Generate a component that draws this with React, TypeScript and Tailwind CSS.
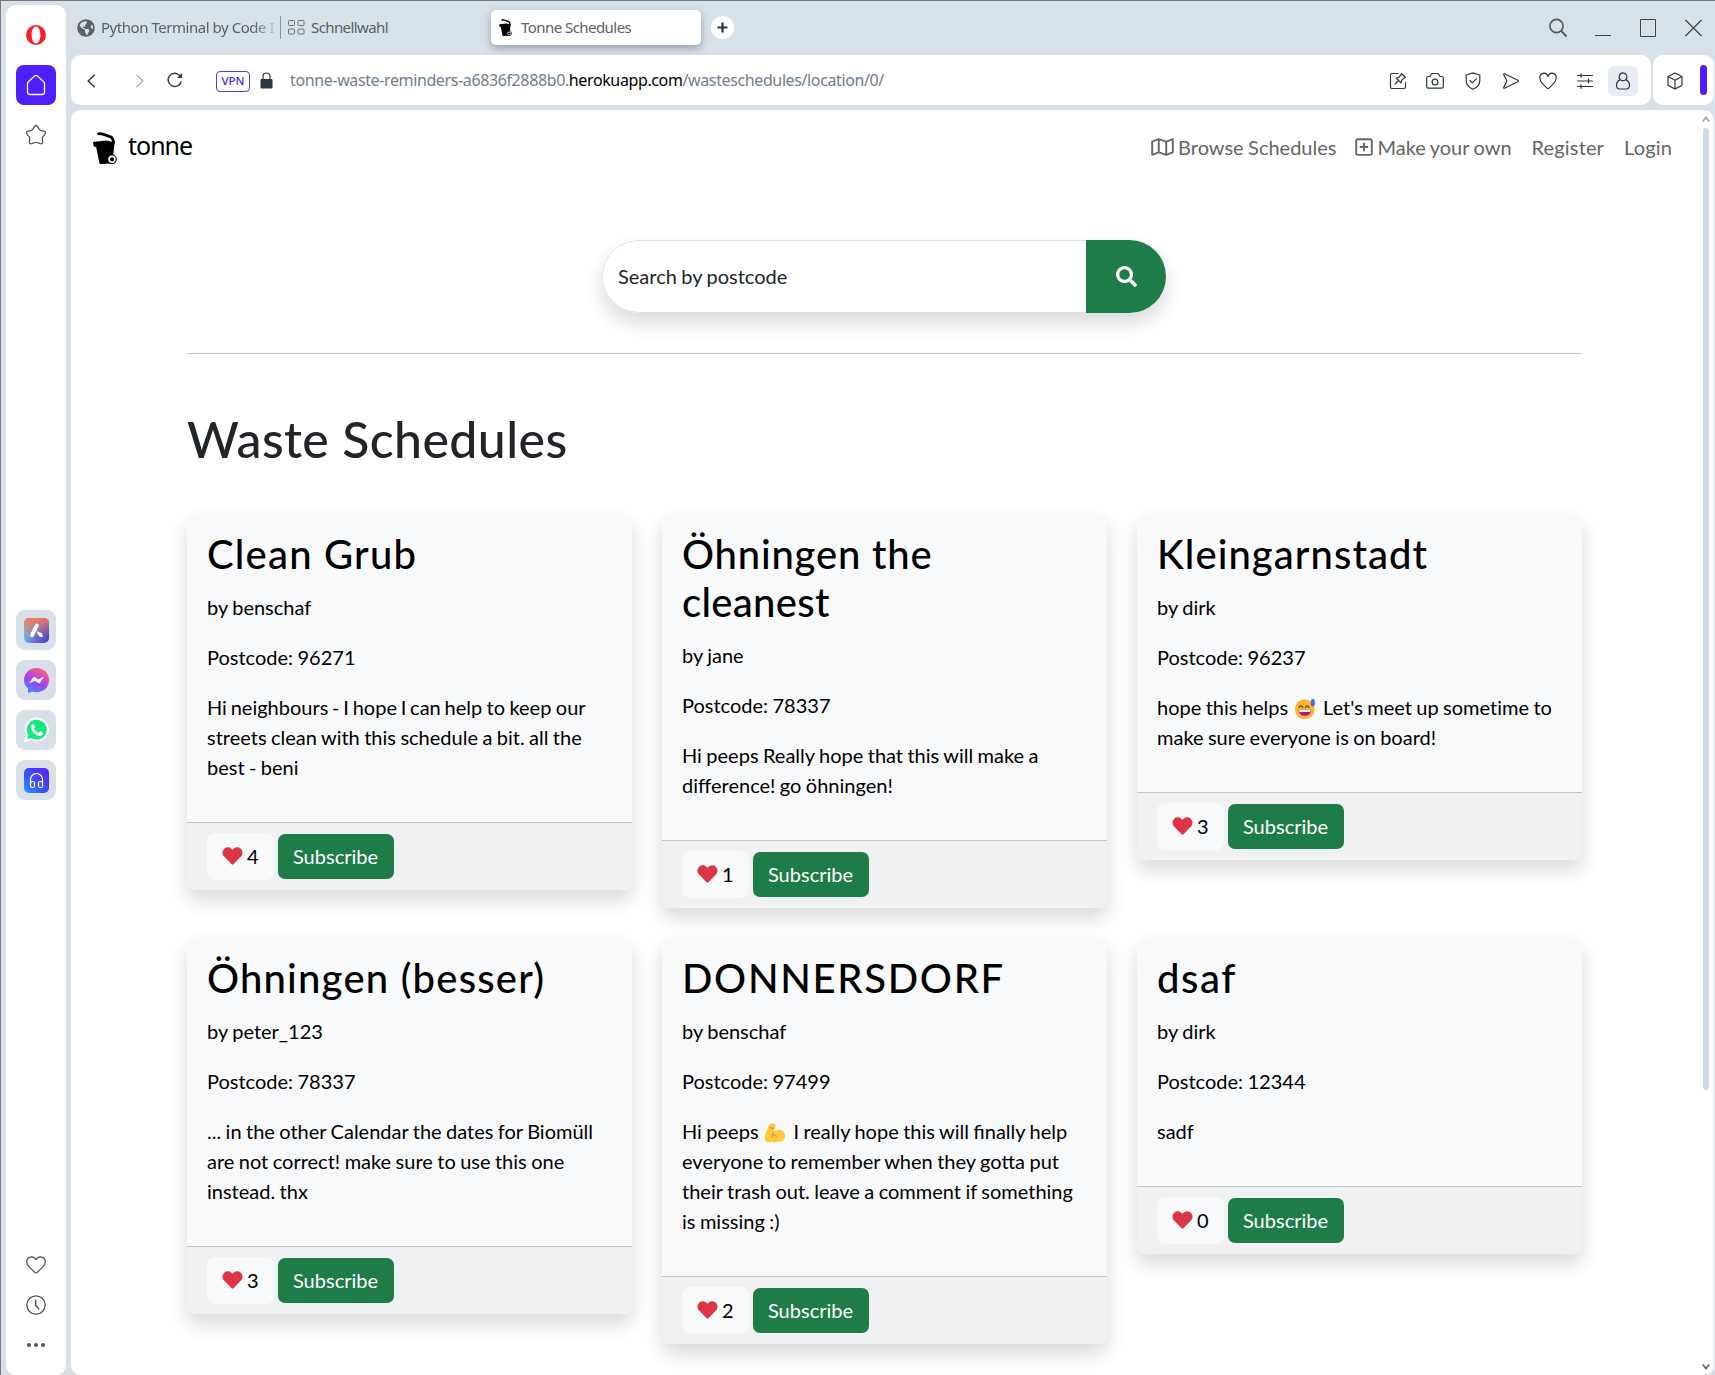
import React from "react";
import { FaHeart, FaGlobeAmericas, FaSearch } from "react-icons/fa";
import { FaRegMap, FaRegSquarePlus } from "react-icons/fa6";

const S = ({ size = 18, w = 1.2, children, className = "" }: any) => (
  <svg width={size} height={size} viewBox="0 0 18 18" fill="none" stroke="currentColor" strokeWidth={w} strokeLinecap="round" strokeLinejoin="round" className={`block shrink-0 ${className}`}>
    {children}
  </svg>
);

const Bin = ({ className = "" }: { className?: string }) => (
  <svg viewBox="0 0 24 32" className={`block shrink-0 ${className}`}>
    <path d="M5.500 1.800Q8 1.300 10 2.100L18 5Q20.300 6.500 20.500 11" fill="none" stroke="#000" strokeWidth="2.800" strokeLinecap="round" />
    <path d="M0 10.800Q0 9.800 1.200 9.700L13.500 8.600L21.500 10.500L20.200 24L19.500 31.500L8 32Q6.500 32 6.200 30.500L3.200 15.200L.8 14.500Z" fill="#000" />
    <circle cx="19" cy="27.300" r="4.800" fill="#000" />
    <circle cx="19" cy="27.300" r="2.900" fill="none" stroke="#fff" strokeWidth="1.600" />
  </svg>
);

const SweatSmile = () => (
  <svg viewBox="0 0 20 20" className="mr-[3.500px] ml-[2.500px] inline-block h-[20px] w-[20px] align-[-4px]">
    <rect x="0" y="0.500" width="19.500" height="19.500" rx="9" fill="#fdb52f" />
    <path d="M4 8.500q1.700-3.200 3.600 0M10.500 8.500q1.700-3.200 3.600 0" fill="none" stroke="#5a3a30" strokeWidth="1.200" strokeLinecap="round" />
    <path d="M3.500 10.700h12.600q-.4 6-6.300 6t-6.300-6z" fill="#b5157c" />
    <path d="M4.200 10.700h11.200v1.600q0 .8-.8.800H5q-.8 0-.8-.8z" fill="#fff" />
    <rect x="15.800" y="0" width="4" height="7.200" rx="2" fill="#4766f5" />
  </svg>
);

const Biceps = () => (
  <svg viewBox="0 0 20 20" className="mr-[3.500px] ml-[2.500px] inline-block h-[20px] w-[20px] align-[-4px]">
    <path d="M5 .8Q8-.4 10.300 1.600Q11.200 3.500 9.500 5.200L8.500 8.800Q11 6.500 14 6.800Q19.500 7.500 20 12.500Q20 17.500 16 18.600Q9 20 1.500 18.700Q-.3 18-.2 15Q.5 8 4 3.500Z" fill="#ffc83d" />
    <path d="M4 3.600L6.200 5.400L8.800 5M7.500 14L8.200 9.800M8 10.500L12 14" fill="none" stroke="#d8862c" strokeWidth="1" strokeLinecap="round" />
  </svg>
);

type Card = { title: React.ReactNode; track: string; by: string; code: string; text: React.ReactNode; likes: number };

const cards: Card[] = [
  { title: "Clean Grub", track: "tracking-[1.2px]", by: "benschaf", code: "96271", text: <><span className="[word-spacing:-1.35px]">Hi neighbours - I hope I can help</span> to keep our streets clean with this schedule a bit. all the best - beni</>, likes: 4 },
  { title: <>Öhningen the<br /><span className="tracking-[0.3px]">cleanest</span></>, track: "tracking-[0.8px]", by: "jane", code: "78337", text: "Hi peeps Really hope that this will make a difference! go öhningen!", likes: 1 },
  { title: "Kleingarnstadt", track: "tracking-[1.05px]", by: "dirk", code: "96237", text: <span className="[font-variant-ligatures:none]">hope this helps <SweatSmile /> Let's meet up sometime to make sure everyone is on board!</span>, likes: 3 },
  { title: "Öhningen (besser)", track: "tracking-[1.2px]", by: "peter_123", code: "78337", text: "... in the other Calendar the dates for Biomüll are not correct! make sure to use this one instead. thx", likes: 3 },
  { title: "DONNERSDORF", track: "tracking-[1.7px]", by: "benschaf", code: "97499", text: <>Hi peeps <Biceps /> I really hope this will finally help everyone to remember when they gotta put their trash out. leave a comment if something is missing :)</>, likes: 2 },
  { title: "dsaf", track: "tracking-[1.6px]", by: "dirk", code: "12344", text: "sadf", likes: 0 },
];

function ScheduleCard({ c }: { c: Card }) {
  return (
    <article className="rounded-[8px] bg-[#f8f9fb] text-black shadow-[0_10px_20px_rgba(0,0,0,0.15)]">
      <div className="p-5">
        <h2 className={`-mt-[4px] mb-[14px] whitespace-nowrap text-[40px] leading-[48px] font-medium [word-spacing:0] ${c.track}`}>{c.title}</h2>
        <p className="mb-5">by {c.by}</p>
        <p className="mb-5">Postcode: {c.code}</p>
        <p className="mb-5">{c.text}</p>
      </div>
      <div className="flex h-[68px] items-center gap-1 rounded-b-[8px] border-t border-[#c3c5c8] bg-[#f0f1f3] px-5">
        <button className="flex h-[47px] w-[67px] items-center rounded-[8px] bg-[#f8f9fb] pl-[15px]">
          <FaHeart className="mr-[4px] h-[20px] w-[21px] text-[#dc3545]" />
          {c.likes}
        </button>
        <button className="h-[45px] w-[116px] rounded-[7px] bg-[#1e7c48] pr-px text-white">Subscribe</button>
      </div>
    </article>
  );
}

function AppTile({ children }: any) {
  return <div className="flex h-10 w-10 items-center justify-center rounded-[9px] bg-[#d7dfe8]">{children}</div>;
}

function Sidebar() {
  return (
    <aside className="flex h-[1370px] w-[60px] shrink-0 flex-col items-center rounded-[10px] bg-white text-[#4a5560]">
      <svg viewBox="0 0 20 20" className="mt-[20px] h-[20px] w-[20px]">
        <path fillRule="evenodd" d="M10 0a10 10 0 1 0 0 20a10 10 0 1 0 0-20zM10 1.600c2.600 0 4.400 3.700 4.400 8.400s-1.800 8.400-4.400 8.400S5.600 14.700 5.600 10S7.400 1.600 10 1.600z" fill="#fa1e2d" />
      </svg>
      <div className="mt-[20px] flex h-10 w-10 items-center justify-center rounded-[8px] bg-[#4f1fff] text-white">
        <svg width="20" height="22" viewBox="0 0 20 22" fill="none" stroke="currentColor" strokeWidth="1.300" strokeLinejoin="round">
          <path d="M1.500 9.500Q1.500 8.500 2.300 7.800L8.600 1.900Q10 .8 11.400 1.900L17.700 7.800Q18.500 8.500 18.500 9.500V18Q18.500 20.500 16 20.500H4Q1.500 20.500 1.500 18Z" />
        </svg>
      </div>
      <svg width="22" height="22" viewBox="0 0 22 22" fill="none" stroke="currentColor" strokeWidth="1.300" strokeLinejoin="round" className="mt-[19px] mr-px">
        <path d="M9.700 2.200Q11 .8 12.300 2.200L14.300 5.300Q14.800 6 15.600 6.300L19.400 7.300Q21.200 8.100 20.200 9.800L17.900 12.700Q17.400 13.400 17.400 14.200L17.600 18Q17.500 20.300 15.300 19.700L12 18.500Q11 18.200 10 18.500L6.700 19.700Q4.500 20.300 4.400 18L4.600 14.200Q4.600 13.400 4.100 12.700L1.800 9.800Q.8 8.100 2.600 7.300L6.400 6.300Q7.200 6 7.700 5.300Z" />
      </svg>
      <div className="mt-[464px] flex flex-col gap-[10px]">
        <AppTile>
          <svg width="25" height="25" viewBox="0 0 25 25">
            <defs>
              <linearGradient id="aria" x1="0" y1=".6" x2="1" y2=".8"><stop offset="0" stopColor="#5ec3ee" /><stop offset=".45" stopColor="#6a72d8" /><stop offset="1" stopColor="#5340c4" /></linearGradient>
              <linearGradient id="ariaTop" x1=".4" y1="0" x2=".5" y2=".8"><stop offset="0" stopColor="#f47c55" /><stop offset="1" stopColor="#f47c55" stopOpacity="0" /></linearGradient>
            </defs>
            <rect width="25" height="25" rx="5" fill="url(#aria)" />
            <rect width="25" height="25" rx="5" fill="url(#ariaTop)" />
            <path d="M12.800 7.600L8 17.200" stroke="#fff" strokeWidth="4" strokeLinecap="round" />
            <path d="M12.500 13.200L17.600 15Q19.300 17 18.600 19Q15.500 19.500 14.600 17.500Z" fill="#fff" />
          </svg>
        </AppTile>
        <AppTile>
          <svg width="25" height="25" viewBox="0 0 25 25">
            <defs><linearGradient id="msg" x1=".2" y1="1" x2=".7" y2="0"><stop offset="0" stopColor="#3a8cff" /><stop offset=".45" stopColor="#a040f5" /><stop offset="1" stopColor="#ff6070" /></linearGradient></defs>
            <path d="M12.500 0C5.500 0 0 5 0 12Q0 17 4 20.500V24.500Q5 25.400 8 23.500Q10 24.200 12.500 24.200C19.500 24.200 25 19 25 12S19.500 0 12.500 0z" fill="url(#msg)" />
            <path d="M5 15.500L9.200 9.300Q10 8.600 11 9.200L14 11.400L20 8.500L16 14.800Q15 15.800 14 15L11 12.700Z" fill="#fff" />
          </svg>
        </AppTile>
        <AppTile>
          <svg width="26" height="26" viewBox="0 0 26 26">
            <path d="M13.500 0.500A12 12 0 0 0 3 18L1 25.500L8 23A12 12 0 1 0 13.500 .5z" fill="#fff" />
            <path d="M13.500 2.800A9.900 9.900 0 0 0 5.300 18L4.200 22.200L8.300 20.900A9.900 9.900 0 1 0 13.500 2.800z" fill="#15e87d" />
            <path d="M9.300 7.300q1-.8 1.600.4l.9 2q.3.700-.6 1.600q-.3.500 0 1q1.600 2.500 4 3.400q.6.100 1-.4q.7-1.100 1.400-.8l2.200 1q.7.500.3 1.500q-1.200 2.300-3.800 1.900q-4.800-1-7.700-5.700q-2-3.500.7-5.900z" fill="#fff" />
          </svg>
        </AppTile>
        <AppTile>
          <svg width="25" height="25" viewBox="0 0 25 25" fill="none" stroke="#fff" strokeWidth="1.200">
            <defs><linearGradient id="play" x1="0" y1="1" x2="1" y2="0"><stop offset="0" stopColor="#2b9bff" /><stop offset=".4" stopColor="#3c55fa" /><stop offset="1" stopColor="#5a1cf5" /></linearGradient></defs>
            <rect width="25" height="25" rx="5" fill="url(#play)" stroke="none" />
            <path d="M6.500 16V11.500a6 6 0 0 1 12 0V16" />
            <rect x="6.500" y="13.500" width="4" height="6" rx="1.800" />
            <rect x="14.500" y="13.500" width="4" height="6" rx="1.800" />
          </svg>
        </AppTile>
      </div>
      <svg width="20" height="18" viewBox="0 0 20 18" fill="none" stroke="currentColor" strokeWidth="1.300" strokeLinejoin="round" className="mt-[456px] mr-px">
        <path d="M10 3.800Q8.800 1 5.600 .9Q.7 1.200 .8 6.200Q1 8.600 2.800 10.600L9 16.500Q10 17.200 11 16.500L17.200 10.600Q19 8.600 19.200 6.200Q19.300 1.200 14.400 .9Q11.200 1 10 3.800Z" />
      </svg>
      <svg width="20" height="20" viewBox="0 0 20 20" fill="none" stroke="currentColor" strokeWidth="1.300" className="mt-[20.5px] mr-px">
        <circle cx="10" cy="10" r="9.200" />
        <path d="M9.700 5.300V10.500L12.800 13.800" strokeWidth="1.500" strokeLinecap="round" />
      </svg>
      <div className="mt-[28.5px] flex gap-[3px]">
        <i className="h-1 w-1 rounded-full bg-current" />
        <i className="h-1 w-1 rounded-full bg-current" />
        <i className="h-1 w-1 rounded-full bg-current" />
      </div>
    </aside>
  );
}

function TabStrip() {
  return (
    <div className="flex h-[54px] items-center pb-px text-[15px] text-[#5b6166]">
      <FaGlobeAmericas className="ml-[6px] h-[18px] w-[18px] text-[#5f6264]" />
      <div className="ml-[6px] w-[178px] overflow-hidden whitespace-nowrap [mask-image:linear-gradient(to_right,black_86%,transparent)]">
        <span className="tracking-[-0.46px]">Python Terminal by Code I</span>
      </div>
      <div className="ml-px h-[23px] w-px bg-[#8b9299]" />
      <svg width="17" height="15" viewBox="0 0 17 15" fill="none" stroke="#6e7478" className="ml-[7px]">
        <rect x=".5" y=".5" width="6" height="5" rx="1" /><rect x="10" y=".5" width="6" height="5" rx="1" />
        <rect x=".5" y="9" width="6" height="5" rx="1" /><rect x="10" y="9" width="6" height="5" rx="1" />
      </svg>
      <span className="ml-[6px] w-[180px] tracking-[-0.6px]">Schnellwahl</span>
      <div className="flex h-[35px] w-[210px] items-center rounded-[5px] bg-white shadow-[0_3px_8px_rgba(60,75,95,0.45)]">
        <Bin className="ml-[8px] h-[17px] w-[13px]" />
        <span className="ml-[9px] tracking-[-0.55px]">Tonne Schedules</span>
      </div>
      <div className="ml-[10px] flex h-[23px] w-[23px] items-center justify-center rounded-full bg-white text-[#26323c]">
        <svg width="11" height="11" viewBox="0 0 11 11" stroke="currentColor" strokeWidth="2.200"><path d="M5.500 .5V10.500M.5 5.500H10.500" /></svg>
      </div>
      <div className="mr-[12px] ml-auto flex items-center text-[#444]">
        <svg width="20" height="20" viewBox="0 0 20 20" fill="none" stroke="#55595c" strokeWidth="1.600"><circle cx="8.500" cy="8" r="6.600" /><path d="M13 12.700L18.500 18.500" strokeWidth="1.900" /></svg>
        <svg width="16" height="18" viewBox="0 0 16 18" fill="none" stroke="currentColor" className="ml-[27px]"><path d="M0 16.500H16" /></svg>
        <svg width="16" height="18" viewBox="0 0 16 18" fill="none" stroke="currentColor" className="ml-[29px]"><path d="M.5 .5H15.500V17.500H.5Z" /></svg>
        <svg width="17" height="18" viewBox="0 0 17 18" fill="none" stroke="currentColor" strokeWidth="1.200" className="ml-[29px]"><path d="M.5 1L16.500 17M16.500 1L.5 17" /></svg>
      </div>
    </div>
  );
}

function AddressBar() {
  return (
    <div className="flex h-[50px] gap-[2px] text-[#2b3742]">
      <div className="flex w-[1580px] items-center rounded-[10px] bg-white pt-[2px]">
        <S size={14} w={1.9} className="ml-[14px]"><path d="M12 1.500L4 9L12 16.500" /></S>
        <S size={14} w={1.5} className="ml-[33px] text-[#a3a9ae]"><path d="M6 1.500L14 9L6 16.500" /></S>
        <svg width="16" height="16" viewBox="0 0 16 16" fill="none" stroke="currentColor" strokeWidth="1.400" className="-mt-[2px] ml-[21px]">
          <path d="M14.200 9.500A6.600 6.600 0 1 1 12.800 3.600L14.500 5.300" /><path d="M15 1V6H10Z" fill="currentColor" stroke="none" />
        </svg>
        <span className="ml-[33px] flex h-[21px] w-[34px] items-center justify-center rounded-[4px] border border-[#5b35e8] text-[11.5px] font-medium text-[#4f1fe8]">VPN</span>
        <svg width="13" height="17" viewBox="0 0 13 17" className="-mt-px ml-[10px] text-[#2b3742]">
          <path d="M3 8V4.200Q3 1 6.500 1T10 4.200V8" fill="none" stroke="currentColor" strokeWidth="1.200" />
          <rect x=".5" y="7" width="12" height="9.500" rx="1.200" fill="currentColor" />
        </svg>
        <span className="-mt-[2px] ml-[17px] text-[16px] tracking-[-0.38px] whitespace-nowrap text-[#70808e]">
          tonne-waste-reminders-a6836f2888b0.<span className="text-black">herokuapp.com</span>/wasteschedules/location/0/
        </span>
        <div className="mr-[13px] ml-auto flex items-center">
          <S><path d="M9 1.500H3Q1.500 1.500 1.500 3V15Q1.500 16.500 3 16.500H15Q16.500 16.500 16.500 15V10.500M6 12L9 9M12.500 1.500L16.500 5.500L14.800 6.200L12.500 8.500L12 10.800L7.200 6L9.500 5.500L11.800 3.200Z" /></S>
          <S className="ml-[19px]"><path d="M.7 6Q.7 4.500 2.200 4.500H4L5.300 2.200Q5.700 1.500 6.500 1.500H11.500Q12.300 1.500 12.700 2.200L14 4.500H15.800Q17.300 4.500 17.300 6V14.500Q17.300 16.200 15.800 16.200H2.200Q.7 16.200 .7 14.500Z" /><circle cx="9" cy="10" r="2.900" /></S>
          <S className="ml-[20px]"><path d="M9 .9L15.800 3V9Q15.600 14.300 9 17.200Q2.400 14.300 2.200 9V3ZM6 8.500L8.300 10.800L12.300 6.800" /></S>
          <S className="ml-[20px]"><path d="M2.500 1.800Q1.300 1.500 1.800 2.800L4.500 8.200Q4.800 9 4.500 9.800L1.800 15.200Q1.300 16.500 2.500 16.200L15.800 9.700Q17 9 15.800 8.300Z" /></S>
          <S className="ml-[19px]"><path d="M9 4.500Q8.200 1.500 5 1.200Q.7 1.500 .8 6.300Q1 9 3.300 11.300L8 16.200Q9 17.300 10 16.200L14.700 11.300Q17 9 17.200 6.300Q17.300 1.500 13 1.200Q9.800 1.500 9 4.500Z" /></S>
          <S className="ml-[19px]"><path d="M1.500 3.500H16.500M1.500 9H16.500M1.500 14.500H16.500M5 1.700V5.300M12.500 7.200V10.800M5 12.700V16.300" /></S>
          <span className="ml-[14px] flex h-[30px] w-[30px] items-center justify-center rounded-[6px] bg-[#e7ecf4]">
            <S><path d="M9 .9A3.900 3.900 0 0 0 6.300 7.600Q2.500 9.300 2.500 13Q2.600 16.900 5.500 17H12.500Q15.400 16.900 15.500 13Q15.500 9.300 11.700 7.600A3.900 3.900 0 0 0 9 .9ZM6.300 7.600Q9 9.800 11.700 7.600" /></S>
          </span>
        </div>
      </div>
      <div className="flex w-[61px] items-center rounded-[10px] bg-white">
        <S className="mt-px ml-[13px]"><path d="M9 1L16 4.500V12.500Q16 13.300 15.300 13.600L9 17L2.700 13.600Q2 13.300 2 12.500V4.500ZM2 4.500L9 8.200L16 4.500M9 8.200V17" /></S>
        <div className="ml-[16px] h-[30px] w-[7px] rounded-full bg-[#4f1fff]" />
      </div>
    </div>
  );
}

export default function App() {
  return (
    <div className="flex h-[1375px] w-[1715px] overflow-hidden border-t border-l border-[#7a7a7c] bg-[#d7e1e9] font-['Noto_Sans',sans-serif]">
      <div className="pt-1 pl-[5px]"><Sidebar /></div>
      <div className="ml-[5px] w-[1643px] shrink-0">
        <TabStrip />
        <AddressBar />
        <div className="mt-[5px] flex h-[1265px] overflow-hidden rounded-[10px] bg-white font-['Lato',sans-serif] text-[20px] leading-[30px] [word-spacing:-0.7px]">
          <main className="w-[1627px]">
            <nav className="flex h-[75px] items-center pl-[22px] text-[#656565]">
              <Bin className="h-[32px] w-[24px]" />
              <span className="-mt-[6px] ml-[11px] font-['Noto_Sans',sans-serif] text-[25px] tracking-[-1px] text-black">tonne</span>
              <div className="-mt-[2px] mr-[26px] ml-auto flex items-center">
                <FaRegMap className="mr-[4px] h-[20px] w-[23px]" />Browse Schedules
                <FaRegSquarePlus className="mr-[4px] ml-[19px] h-[20px] w-[18px]" />Make your own
                <span className="ml-[20px] tracking-[0.15px]">Register</span>
                <span className="ml-[20px] tracking-[0.15px]">Login</span>
              </div>
            </nav>
            <div className="ml-[116px] w-[1395px]">
              <div className="mt-[55px] ml-[415px] flex h-[73px] w-[564px] overflow-hidden rounded-[37px] shadow-[0_10px_20px_rgba(0,0,0,0.15)]">
                <div className="flex w-[484px] items-center rounded-l-[37px] border border-r-0 border-[#dee2e6] bg-white pb-[2px] pl-[15px] text-[#212529]">Search by postcode</div>
                <div className="flex flex-1 items-center justify-center bg-[#1e7c48] text-white"><FaSearch className="h-[21px] w-[21px]" /></div>
              </div>
              <hr className="mt-[40px] border-t border-[#c4c5c6]" />
              <h1 className="mt-[55px] text-[50px] leading-[60px] font-medium tracking-[0.4px] text-[#212529] [word-spacing:0]">Waste Schedules</h1>
              <div className="mt-[44.5px] grid grid-cols-3 items-start gap-[30px]">
                {cards.map((c, i) => <ScheduleCard key={i} c={c} />)}
              </div>
            </div>
          </main>
          <div className="ml-[3px] flex w-[10px] flex-col items-center">
            <svg width="8" height="6" viewBox="0 0 8 6" fill="none" stroke="#a3a7ab" strokeWidth="1.800" className="mt-[6px]"><path d="M.8 5.500L4 1.500L7.200 5.500" /></svg>
            <div className="mt-[6px] h-[962px] w-[6px] rounded-full bg-[#d0dae4]" />
            <svg width="8" height="6" viewBox="0 0 8 6" fill="none" stroke="#6b7075" strokeWidth="1.800" className="mt-auto mb-[5px]"><path d="M.8 .5L4 4.500L7.200 .5" /></svg>
          </div>
        </div>
      </div>
    </div>
  );
}
